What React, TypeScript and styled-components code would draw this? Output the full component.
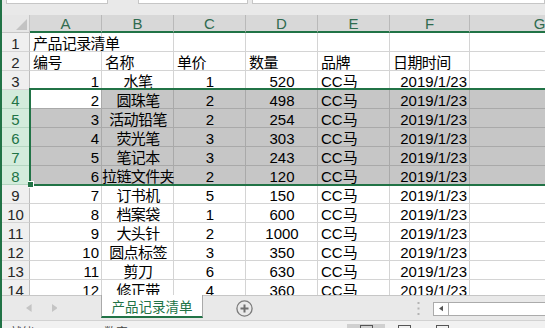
import React from 'react';
import styled, { createGlobalStyle } from 'styled-components';

const GREEN = '#217346';

type Align = 'left' | 'center' | 'right';
type Tone = 'plain' | 'sel' | 'active';

interface Item {
    no: number;
    name: string;
    price: number;
    qty: number;
}

interface CellData {
    text: string;
    align: Align;
    tight?: boolean;
}

const items: Item[] = [
    { no: 1, name: '水笔', price: 1, qty: 520 },
    { no: 2, name: '圆珠笔', price: 2, qty: 498 },
    { no: 3, name: '活动铅笔', price: 2, qty: 254 },
    { no: 4, name: '荧光笔', price: 3, qty: 303 },
    { no: 5, name: '笔记本', price: 3, qty: 243 },
    { no: 6, name: '拉链文件夹', price: 2, qty: 120 },
    { no: 7, name: '订书机', price: 5, qty: 150 },
    { no: 8, name: '档案袋', price: 1, qty: 600 },
    { no: 9, name: '大头针', price: 2, qty: 1000 },
    { no: 10, name: '圆点标签', price: 3, qty: 350 },
    { no: 11, name: '剪刀', price: 6, qty: 630 },
    { no: 12, name: '修正带', price: 4, qty: 360 },
];

const LETTERS = ['A', 'B', 'C', 'D', 'E', 'F', 'G'];
const HEADINGS = ['编号', '名称', '单价', '数量', '品牌', '日期时间'];

const GlobalStyle = createGlobalStyle`
    html, body {
        margin: 0;
        padding: 0;
        overflow: hidden;
        background: #fff;
    }
    body {
        font-family: "Liberation Sans", "Noto Sans CJK SC", sans-serif;
    }
`;

const Window = styled.div`
    width: 545px;
    height: 328px;
    box-sizing: border-box;
    border-left: 2px solid ${GREEN};
    display: flex;
    flex-direction: column;
    overflow: hidden;
    background: #e9e9e9;
`;

const FormulaBar = styled.div`
    height: 15px;
    flex: none;
    display: flex;
    align-items: flex-start;
    background: #e9e9e9;
`;

const InputBox = styled.div<{ $left: number; $width?: number }>`
    box-sizing: border-box;
    height: 4px;
    margin-left: ${(p) => p.$left}px;
    width: ${(p) => (p.$width ? `${p.$width}px` : 'auto')};
    flex: ${(p) => (p.$width ? 'none' : '1')};
    background: #fff;
    border: 1px solid #c6c6c6;
    border-top: none;
`;

const Sheet = styled.div`
    position: relative;
    height: 280px;
    flex: none;
    overflow: hidden;
    background: #fff;
    display: grid;
    grid-template-columns: 28px 72px 72px 72px 72px 72px 80px 140px;
    grid-template-rows: 18px;
    grid-auto-rows: 19px;
    font-size: 15px;
    color: #000;
`;

const Corner = styled.div`
    box-sizing: border-box;
    background: #e6e6e6;
    border-right: 1px solid #c6c6c6;
    border-bottom: 1px solid #c6c6c6;
    display: flex;
    align-items: flex-end;
    justify-content: flex-end;
    padding: 0 2px 2px 0;
`;

const ColHead = styled.div`
    box-sizing: border-box;
    background: #d8d8d8;
    border-right: 1px solid #b9b9b9;
    border-bottom: 2px solid ${GREEN};
    display: flex;
    align-items: center;
    justify-content: center;
    padding-top: 1px;
    color: #2f6b4f;
    font-size: 15px;
`;

const RowHead = styled.div<{ $hi?: boolean }>`
    box-sizing: border-box;
    background: ${(p) => (p.$hi ? '#d3ecdc' : '#efefef')};
    color: ${(p) => (p.$hi ? GREEN : '#262626')};
    border-right: 1px solid #bdbdbd;
    border-bottom: 1px solid ${(p) => (p.$hi ? '#b5d6c2' : '#d4d4d4')};
    text-align: center;
    line-height: 18px;
    padding-top: 2px;
`;

const Cell = styled.div<{ $align?: Align; $tone?: Tone }>`
    box-sizing: border-box;
    display: flex;
    justify-content: ${(p) =>
        p.$align === 'right' ? 'flex-end' : p.$align === 'center' ? 'center' : 'flex-start'};
    padding: 2px 2px 0 3px;
    line-height: 18px;
    white-space: nowrap;
    background: ${(p) => (p.$tone === 'sel' ? '#c6c6c6' : '#fff')};
    border-right: 1px solid ${(p) => (p.$tone === 'plain' ? '#d4d4d4' : '#a9a9a9')};
    border-bottom: 1px solid ${(p) => (p.$tone === 'plain' ? '#d4d4d4' : '#a9a9a9')};
`;

const Text = styled.span<{ $tight?: boolean }>`
    position: relative;
    flex: none;
    letter-spacing: ${(p) => (p.$tight ? '-0.6px' : '0')};
`;

const Selection = styled.div`
    position: absolute;
    left: 27px;
    top: 73px;
    width: 700px;
    height: 98px;
    box-sizing: border-box;
    border: 2px solid ${GREEN};
    pointer-events: none;
`;

const FillHandle = styled.div`
    position: absolute;
    left: -3px;
    bottom: -4px;
    width: 5px;
    height: 5px;
    background: ${GREEN};
    border: 1px solid #fff;
    border-left: none;
`;

const TabBar = styled.div`
    height: 25px;
    flex: none;
    box-sizing: border-box;
    border-top: 1px solid #c6c6c6;
    background: #e9e9e9;
    display: flex;
    align-items: center;
`;

const NavArea = styled.div`
    width: 99px;
    align-self: stretch;
    display: flex;
    align-items: center;
    gap: 20px;
    padding-left: 24px;
    box-sizing: border-box;
`;

const SheetTab = styled.div`
    align-self: flex-start;
    margin-top: -1px;
    width: 102px;
    box-sizing: border-box;
    height: 23px;
    background: #fff;
    border-left: 1px solid #a9a9a9;
    border-right: 1px solid #a9a9a9;
    border-bottom: 2px solid ${GREEN};
    color: ${GREEN};
    font-size: 13.5px;
    display: flex;
    align-items: center;
    justify-content: center;
    padding-top: 1px;
`;

const AddButton = styled.div`
    margin-left: 33px;
    display: flex;
    margin-top: 1px;
`;

const More = styled.div`
    margin-left: auto;
    margin-right: 13px;
    display: flex;
`;

const ScrollBar = styled.div`
    width: 112px;
    height: 14px;
    box-sizing: border-box;
    border: 1px solid #ababab;
    border-right: none;
    background: #fff;
    display: flex;
    margin-top: 1px;
`;

const ScrollArrow = styled.div`
    width: 15px;
    box-sizing: border-box;
    border-right: 1px solid #ababab;
    display: flex;
    align-items: center;
    justify-content: center;
`;

const StatusBar = styled.div`
    flex: 1;
    box-sizing: border-box;
    border-top: 1px solid #d2d2d2;
    background: #f1f1f1;
    display: flex;
    align-items: flex-start;
    overflow: hidden;
    font-size: 12px;
    color: #444;
`;

const StatusText = styled.span<{ $left: number }>`
    margin-left: ${(p) => p.$left}px;
    margin-top: 5px;
    line-height: 14px;
`;

const ViewButtons = styled.div`
    margin-left: auto;
    margin-right: 84px;
    display: flex;
    margin-top: 3px;
`;

const ViewButton = styled.div<{ $on?: boolean }>`
    width: 38px;
    height: 10px;
    display: flex;
    justify-content: center;
    padding-top: 1px;
    background: ${(p) => (p.$on ? '#d0d0d0' : 'transparent')};
`;

const ViewIcon = styled.div`
    width: 13px;
    height: 8px;
    box-sizing: border-box;
    border: 1px solid #555;
`;

const TriangleLeft = ({ color, size = 6 }: { color: string; size?: number }) => (
    <svg width={size * 0.7} height={size} viewBox="0 0 7 10">
        <polygon points="7,0 0,5 7,10" fill={color} />
    </svg>
);

const TriangleRight = ({ color, size = 6 }: { color: string; size?: number }) => (
    <svg width={size * 0.7} height={size} viewBox="0 0 7 10">
        <polygon points="0,0 7,5 0,10" fill={color} />
    </svg>
);

const blank: CellData = { text: '', align: 'left' };

const App = () => {
    const toneOf = (r: number, c: number): Tone => {
        if (r >= 4 && r <= 8) return r === 4 && c === 0 ? 'active' : 'sel';
        return 'plain';
    };

    const renderRow = (r: number, cells: CellData[]) => (
        <React.Fragment key={r}>
            <RowHead $hi={r >= 4 && r <= 8}>{r}</RowHead>
            {cells.map((c, i) => (
                <Cell key={i} $align={c.align} $tone={toneOf(r, i)}>
                    {c.text && <Text $tight={c.tight}>{c.text}</Text>}
                </Cell>
            ))}
        </React.Fragment>
    );

    return (
        <Window>
            <GlobalStyle />
            <FormulaBar>
                <InputBox $left={4} $width={102} />
                <InputBox $left={30} $width={110} />
                <InputBox $left={4} />
            </FormulaBar>
            <Sheet>
                <Corner>
                    <svg width="11" height="11" viewBox="0 0 11 11">
                        <polygon points="11,0 11,11 0,11" fill="#c3c3c3" />
                    </svg>
                </Corner>
                {LETTERS.map((l) => (
                    <ColHead key={l}>{l}</ColHead>
                ))}
                {renderRow(1, [
                    { text: '产品记录清单', align: 'left', tight: true },
                    blank, blank, blank, blank, blank, blank,
                ])}
                {renderRow(2, [
                    ...HEADINGS.map((h) => ({ text: h, align: 'left' as Align, tight: true })),
                    blank,
                ])}
                {items.map((it, i) =>
                    renderRow(i + 3, [
                        { text: String(it.no), align: 'right' },
                        { text: it.name, align: 'center', tight: true },
                        { text: String(it.price), align: 'center' },
                        { text: String(it.qty), align: 'center' },
                        { text: 'CC马', align: 'left' },
                        { text: '2019/1/23', align: 'right' },
                        blank,
                    ])
                )}
                <Selection>
                    <FillHandle />
                </Selection>
            </Sheet>
            <TabBar>
                <NavArea>
                    <TriangleLeft color="#c4c4c4" size={8} />
                    <TriangleRight color="#c4c4c4" size={8} />
                </NavArea>
                <SheetTab>产品记录清单</SheetTab>
                <AddButton>
                    <svg width="17" height="17" viewBox="0 0 17 17">
                        <circle cx="8.5" cy="8.5" r="7.6" fill="none" stroke="#7b7b7b" strokeWidth="1.3" />
                        <path d="M8.5 4.5v8M4.5 8.5h8" stroke="#6f6f6f" strokeWidth="2" />
                    </svg>
                </AddButton>
                <More>
                    <svg width="3" height="13" viewBox="0 0 3 13">
                        <rect x="0.5" y="0" width="2" height="2" fill="#b3b3b3" />
                        <rect x="0.5" y="5.5" width="2" height="2" fill="#b3b3b3" />
                        <rect x="0.5" y="11" width="2" height="2" fill="#b3b3b3" />
                    </svg>
                </More>
                <ScrollBar>
                    <ScrollArrow>
                        <TriangleLeft color="#555" size={7} />
                    </ScrollArrow>
                </ScrollBar>
            </TabBar>
            <StatusBar>
                <StatusText $left={8}>就绪</StatusText>
                <StatusText $left={70}>数字</StatusText>
                <ViewButtons>
                    <ViewButton $on>
                        <ViewIcon />
                    </ViewButton>
                    <ViewButton>
                        <ViewIcon />
                    </ViewButton>
                    <ViewButton>
                        <ViewIcon />
                    </ViewButton>
                </ViewButtons>
            </StatusBar>
        </Window>
    );
};

export default App;
